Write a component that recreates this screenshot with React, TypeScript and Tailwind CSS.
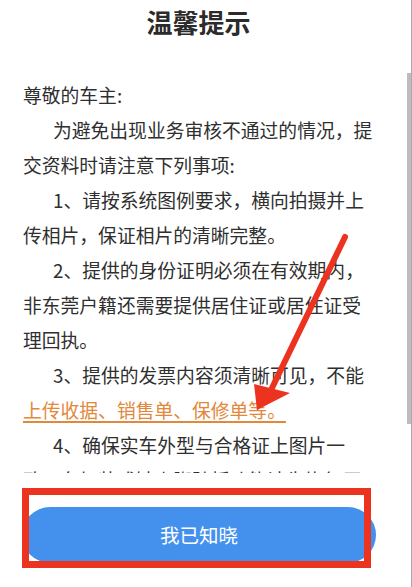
const font = "font-['Noto_Sans_CJK_SC','Noto_Sans',sans-serif]";

const paragraphs = [
  "1、请按系统图例要求，横向拍摄并上传相片，保证相片的清晰完整。",
  "2、提供的身份证明必须在有效期内，非东莞户籍还需要提供居住证或居住证受理回执。",
];

export default function App() {
  return (
    <div className={`relative flex h-[587px] w-[412px] overflow-hidden bg-white ${font}`}>
      <div className="flex w-[407px] flex-col">
        <div className="flex h-[44px] items-center justify-center pr-[10px]">
          <h1 className="text-[26px] font-bold leading-none text-[#2b2b2b]">温馨提示</h1>
        </div>

        <div className="h-[429px] overflow-hidden pl-[23px] pt-[33px]">
          <div className="w-[355px] text-[18.8px] leading-[35px] text-[#2f2f2f]">
            <p>尊敬的车主:</p>
            <p className="indent-[30px]">为避免出现业务审核不通过的情况，提交资料时请注意下列事项:</p>
            {paragraphs.map((t) => (
              <p key={t} className="indent-[30px]">
                {t}
              </p>
            ))}
            <p className="indent-[30px]">
              3、提供的发票内容须清晰可见，不能
              <span className="text-[#e2883a] underline decoration-[#e2883a] decoration-[1.5px] underline-offset-[3px]">
                上传收据、销售单、保修单等。
              </span>
            </p>
            <p className="indent-[30px]">4、确保实车外型与合格证上图片一致，车加装或缺少脚踏板功能请先恢复原厂状态。</p>
          </div>
        </div>

        <div className="pl-[22px] pt-[34px]">
          <button className="flex h-[56px] w-[354px] items-center justify-center rounded-full bg-[#4391ec] text-[19.5px] text-white">
            我已知晓
          </button>
        </div>
      </div>

      {/* scrollbar + edge line */}
      <div className="flex w-[5px]">
        <div className="w-[4px]">
          <div className="mt-[73px] h-[351px] bg-[#bcbcbc]" />
        </div>
        <div className="w-px bg-[#a3abb7]" />
      </div>

      {/* annotation overlay */}
      <svg className="pointer-events-none absolute inset-0" width="412" height="587" viewBox="0 0 412 587">
        <rect x="25.5" y="491.5" width="342" height="73" fill="none" stroke="#ec3320" strokeWidth="7" />
        <line x1="345" y1="237" x2="272" y2="388" stroke="#ec3320" strokeWidth="6" strokeLinecap="round" />
        <polygon points="254,384 290,393 257,410" fill="#ec3320" />
      </svg>
    </div>
  );
}
